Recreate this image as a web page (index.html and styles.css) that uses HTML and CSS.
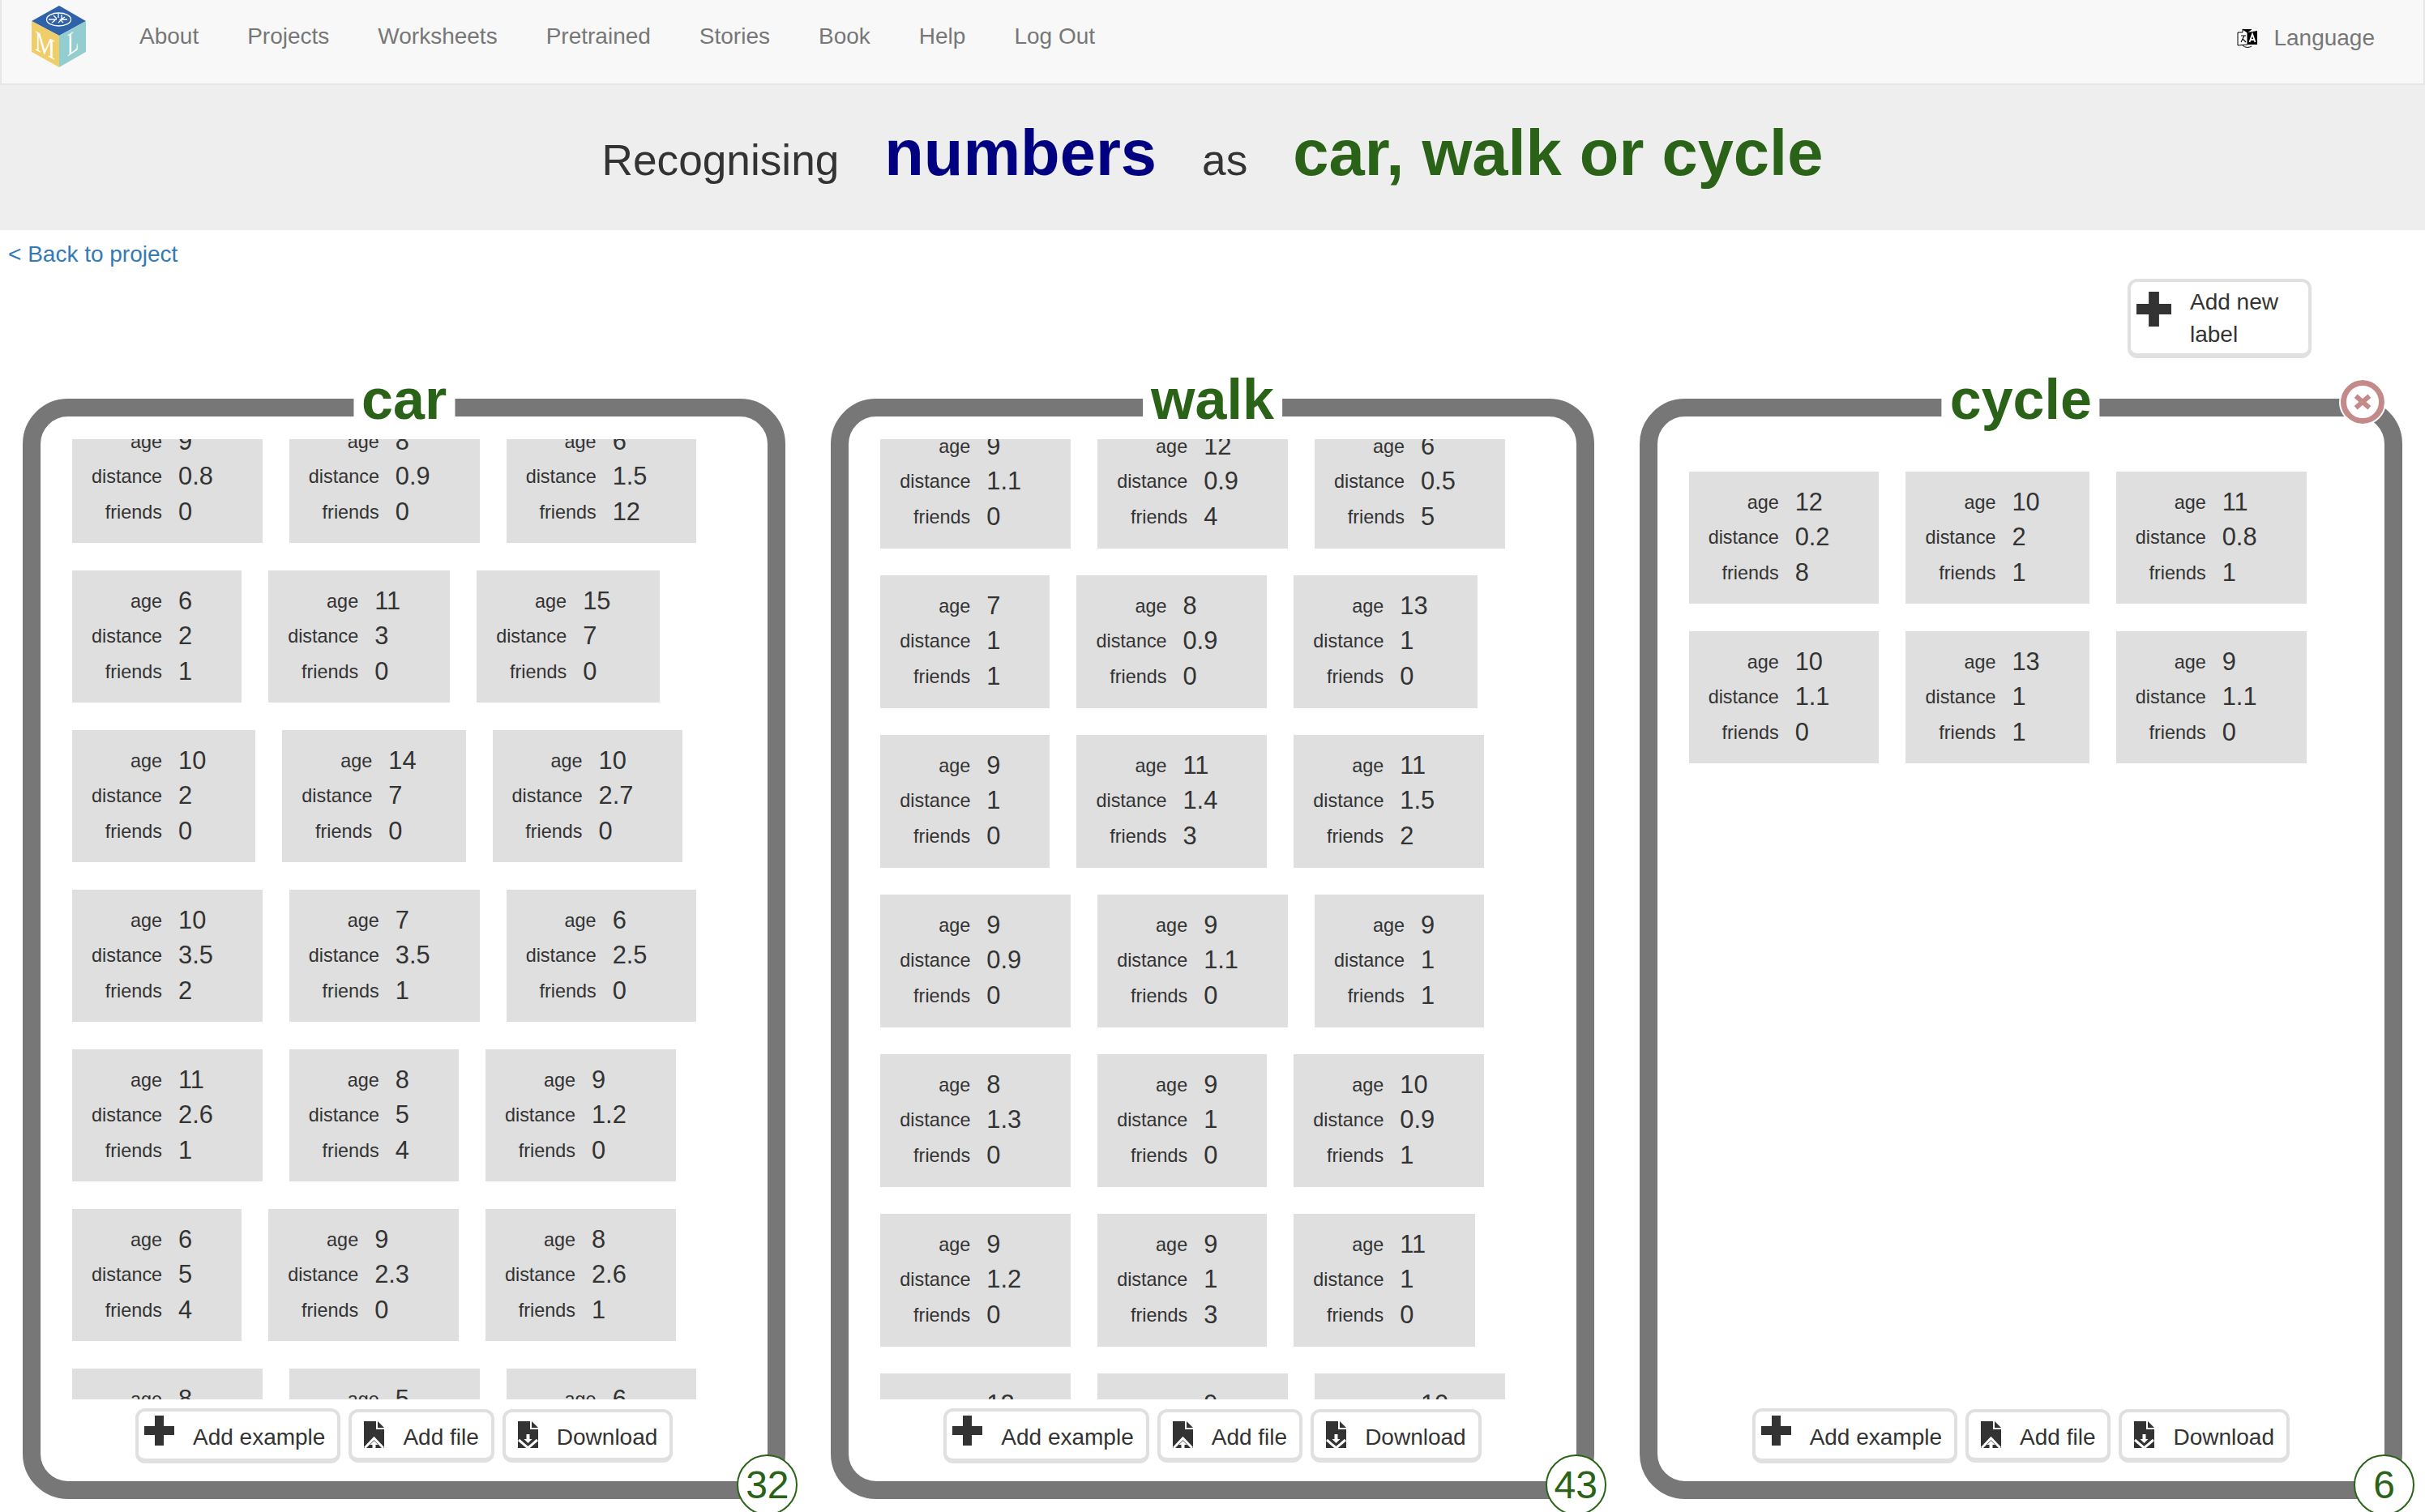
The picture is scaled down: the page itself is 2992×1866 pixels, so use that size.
FILE: index.html
```html
<!DOCTYPE html>
<html lang="en">
<head>
    <meta charset="UTF-8">
    <title>Machine Learning for Kids - Training</title>
    <link rel="stylesheet" href="styles.css">
</head>
<body>
    <nav class="navbar">
        <svg class="logo" viewBox="39 7 67 76" width="67" height="76">
            <polygon points="73,7 106,26 73,44 39,26" fill="#2f62a8"/>
            <polygon points="39,26 73,44 73,83 39,64" fill="#efcd68"/>
            <polygon points="106,26 73,44 73,83 106,64" fill="#93cdcf"/>
            <g fill="none" stroke="#fff" stroke-width="1.3">
                <ellipse cx="72.500" cy="24" rx="15" ry="8"/>
                <path d="M60 24h10M66 19l4 4M76 18v6l-4 4M80 21l-5 3h8M64 28l4-3M72 17v5M78 28l-3-3"/>
            </g>
            <text class="logo-letter" transform="matrix(.88 .46 0 1.1 43 61)" font-size="32">M</text>
            <text class="logo-letter" transform="matrix(.72 -.5 0 1.25 83 70)" font-size="32">L</text>
        </svg>
        <a href="#">About</a>
        <a href="#">Projects</a>
        <a href="#">Worksheets</a>
        <a href="#">Pretrained</a>
        <a href="#">Stories</a>
        <a href="#">Book</a>
        <a href="#">Help</a>
        <a href="#">Log Out</a>
        <div class="language">
            <svg viewBox="0 0 26 24" width="26" height="24">
                <path d="M13 5L7 1v4H1v16l12-1z" fill="#fff" stroke="#000" stroke-width="1"/>
                <path d="M13 5l12-2v17H13z" fill="#000"/>
                <path d="M7 1l6 4 5-4" fill="#000" stroke="#000"/>
                <path d="M5 9h6M9 9l-4 8M7 13l4 4" fill="none" stroke="#000" stroke-width="1.100"/>
                <path d="M15.500 17l3.500-10 3.500 10M16.800 14h4.400" fill="none" stroke="#fff" stroke-width="1.800"/>
                <path d="M7 21c3 3 8 3 11 1" fill="none" stroke="#000" stroke-width="1"/>
            </svg>
            <span>Language</span>
        </div>
    </nav>

    <header class="title-bar">
        <span>Recognising</span>
        <span class="big numbers">numbers</span>
        <span>as</span>
        <span class="big labels">car, walk or cycle</span>
    </header>

    <a class="back-link" href="#">&lt; Back to project</a>

    <div class="toolbar">
        <button class="btn btn-new">
            <svg class="icon-plus" viewBox="0 0 37 37"><use href="#plus"/></svg>
            <span>Add new label</span>
        </button>
    </div>

    <svg class="defs" width="0" height="0">
        <symbol id="plus" viewBox="0 0 37 37">
            <path d="M13 0h11v13h13v11H24v13H13V24H0V13h13z" fill="#333"/>
        </symbol>
        <symbol id="upload" viewBox="0 0 25 33">
            <path d="M0 0h15v10h10v23H0z" fill="#333"/>
            <path d="M17 0l8 8h-8z" fill="#333"/>
            <path d="M1 33l11.500-12L24 33" fill="none" stroke="#fff" stroke-width="3"/>
            <path d="M12.500 24l5 5h-3v4h-4v-4h-3z" fill="#fff"/>
        </symbol>
        <symbol id="download" viewBox="0 0 25 33">
            <path d="M0 0h15v10h10v23H0z" fill="#333"/>
            <path d="M17 0l8 8h-8z" fill="#333"/>
            <path d="M1 23l11.500 10L24 23" fill="none" stroke="#fff" stroke-width="3"/>
            <path d="M10.500 16h4v6h3l-5 5-5-5h3z" fill="#fff"/>
        </symbol>
    </svg>

    <main class="buckets">
        <section class="bucket">
            <h2 class="bucket-title">car</h2>
            <div class="examples-window">
                <div class="examples examples-car">
                    <div class="card"><span class="k">age</span><span class="v">9</span><span class="k">distance</span><span class="v">0.8</span><span class="k">friends</span><span class="v">0</span></div>
                    <div class="card"><span class="k">age</span><span class="v">8</span><span class="k">distance</span><span class="v">0.9</span><span class="k">friends</span><span class="v">0</span></div>
                    <div class="card"><span class="k">age</span><span class="v">6</span><span class="k">distance</span><span class="v">1.5</span><span class="k">friends</span><span class="v">12</span></div>

                    <div class="card"><span class="k">age</span><span class="v">6</span><span class="k">distance</span><span class="v">2</span><span class="k">friends</span><span class="v">1</span></div>
                    <div class="card"><span class="k">age</span><span class="v">11</span><span class="k">distance</span><span class="v">3</span><span class="k">friends</span><span class="v">0</span></div>
                    <div class="card"><span class="k">age</span><span class="v">15</span><span class="k">distance</span><span class="v">7</span><span class="k">friends</span><span class="v">0</span></div>

                    <div class="card"><span class="k">age</span><span class="v">10</span><span class="k">distance</span><span class="v">2</span><span class="k">friends</span><span class="v">0</span></div>
                    <div class="card"><span class="k">age</span><span class="v">14</span><span class="k">distance</span><span class="v">7</span><span class="k">friends</span><span class="v">0</span></div>
                    <div class="card"><span class="k">age</span><span class="v">10</span><span class="k">distance</span><span class="v">2.7</span><span class="k">friends</span><span class="v">0</span></div>

                    <div class="card"><span class="k">age</span><span class="v">10</span><span class="k">distance</span><span class="v">3.5</span><span class="k">friends</span><span class="v">2</span></div>
                    <div class="card"><span class="k">age</span><span class="v">7</span><span class="k">distance</span><span class="v">3.5</span><span class="k">friends</span><span class="v">1</span></div>
                    <div class="card"><span class="k">age</span><span class="v">6</span><span class="k">distance</span><span class="v">2.5</span><span class="k">friends</span><span class="v">0</span></div>

                    <div class="card"><span class="k">age</span><span class="v">11</span><span class="k">distance</span><span class="v">2.6</span><span class="k">friends</span><span class="v">1</span></div>
                    <div class="card"><span class="k">age</span><span class="v">8</span><span class="k">distance</span><span class="v">5</span><span class="k">friends</span><span class="v">4</span></div>
                    <div class="card"><span class="k">age</span><span class="v">9</span><span class="k">distance</span><span class="v">1.2</span><span class="k">friends</span><span class="v">0</span></div>

                    <div class="card"><span class="k">age</span><span class="v">6</span><span class="k">distance</span><span class="v">5</span><span class="k">friends</span><span class="v">4</span></div>
                    <div class="card"><span class="k">age</span><span class="v">9</span><span class="k">distance</span><span class="v">2.3</span><span class="k">friends</span><span class="v">0</span></div>
                    <div class="card"><span class="k">age</span><span class="v">8</span><span class="k">distance</span><span class="v">2.6</span><span class="k">friends</span><span class="v">1</span></div>

                    <div class="card"><span class="k">age</span><span class="v">8</span><span class="k">distance</span><span class="v">1.5</span><span class="k">friends</span><span class="v">0</span></div>
                    <div class="card"><span class="k">age</span><span class="v">5</span><span class="k">distance</span><span class="v">1.5</span><span class="k">friends</span><span class="v">0</span></div>
                    <div class="card"><span class="k">age</span><span class="v">6</span><span class="k">distance</span><span class="v">1.5</span><span class="k">friends</span><span class="v">0</span></div>
                </div>
            </div>
            <div class="bucket-actions">
                <button class="btn"><svg class="icon-plus" viewBox="0 0 37 37"><use href="#plus"/></svg><span>Add example</span></button>
                <button class="btn"><svg class="icon-file" viewBox="0 0 25 33"><use href="#upload"/></svg><span>Add file</span></button>
                <button class="btn"><svg class="icon-file" viewBox="0 0 25 33"><use href="#download"/></svg><span>Download</span></button>
            </div>
            <div class="count">32</div>
        </section>

        <section class="bucket">
            <h2 class="bucket-title">walk</h2>
            <div class="examples-window">
                <div class="examples examples-walk">
                    <div class="card"><span class="k">age</span><span class="v">9</span><span class="k">distance</span><span class="v">1.1</span><span class="k">friends</span><span class="v">0</span></div>
                    <div class="card"><span class="k">age</span><span class="v">12</span><span class="k">distance</span><span class="v">0.9</span><span class="k">friends</span><span class="v">4</span></div>
                    <div class="card"><span class="k">age</span><span class="v">6</span><span class="k">distance</span><span class="v">0.5</span><span class="k">friends</span><span class="v">5</span></div>

                    <div class="card"><span class="k">age</span><span class="v">7</span><span class="k">distance</span><span class="v">1</span><span class="k">friends</span><span class="v">1</span></div>
                    <div class="card"><span class="k">age</span><span class="v">8</span><span class="k">distance</span><span class="v">0.9</span><span class="k">friends</span><span class="v">0</span></div>
                    <div class="card"><span class="k">age</span><span class="v">13</span><span class="k">distance</span><span class="v">1</span><span class="k">friends</span><span class="v">0</span></div>

                    <div class="card"><span class="k">age</span><span class="v">9</span><span class="k">distance</span><span class="v">1</span><span class="k">friends</span><span class="v">0</span></div>
                    <div class="card"><span class="k">age</span><span class="v">11</span><span class="k">distance</span><span class="v">1.4</span><span class="k">friends</span><span class="v">3</span></div>
                    <div class="card"><span class="k">age</span><span class="v">11</span><span class="k">distance</span><span class="v">1.5</span><span class="k">friends</span><span class="v">2</span></div>

                    <div class="card"><span class="k">age</span><span class="v">9</span><span class="k">distance</span><span class="v">0.9</span><span class="k">friends</span><span class="v">0</span></div>
                    <div class="card"><span class="k">age</span><span class="v">9</span><span class="k">distance</span><span class="v">1.1</span><span class="k">friends</span><span class="v">0</span></div>
                    <div class="card"><span class="k">age</span><span class="v">9</span><span class="k">distance</span><span class="v">1</span><span class="k">friends</span><span class="v">1</span></div>

                    <div class="card"><span class="k">age</span><span class="v">8</span><span class="k">distance</span><span class="v">1.3</span><span class="k">friends</span><span class="v">0</span></div>
                    <div class="card"><span class="k">age</span><span class="v">9</span><span class="k">distance</span><span class="v">1</span><span class="k">friends</span><span class="v">0</span></div>
                    <div class="card"><span class="k">age</span><span class="v">10</span><span class="k">distance</span><span class="v">0.9</span><span class="k">friends</span><span class="v">1</span></div>

                    <div class="card"><span class="k">age</span><span class="v">9</span><span class="k">distance</span><span class="v">1.2</span><span class="k">friends</span><span class="v">0</span></div>
                    <div class="card"><span class="k">age</span><span class="v">9</span><span class="k">distance</span><span class="v">1</span><span class="k">friends</span><span class="v">3</span></div>
                    <div class="card"><span class="k">age</span><span class="v">11</span><span class="k">distance</span><span class="v">1</span><span class="k">friends</span><span class="v">0</span></div>

                    <div class="card"><span class="k">age</span><span class="v">12</span><span class="k">distance</span><span class="v">1.5</span><span class="k">friends</span><span class="v">0</span></div>
                    <div class="card"><span class="k">age</span><span class="v">9</span><span class="k">distance</span><span class="v">1.5</span><span class="k">friends</span><span class="v">0</span></div>
                    <div class="card"><span class="k">age</span><span class="v">10</span><span class="k">distance</span><span class="v">1.5</span><span class="k">friends</span><span class="v">0</span></div>
                </div>
            </div>
            <div class="bucket-actions">
                <button class="btn"><svg class="icon-plus" viewBox="0 0 37 37"><use href="#plus"/></svg><span>Add example</span></button>
                <button class="btn"><svg class="icon-file" viewBox="0 0 25 33"><use href="#upload"/></svg><span>Add file</span></button>
                <button class="btn"><svg class="icon-file" viewBox="0 0 25 33"><use href="#download"/></svg><span>Download</span></button>
            </div>
            <div class="count">43</div>
        </section>

        <section class="bucket">
            <h2 class="bucket-title">cycle</h2>
            <div class="remove-label">
                <svg viewBox="0 0 20 20" width="24" height="24"><path d="M3 4l14 12M17 4L3 16" stroke="#c48a8a" stroke-width="5" fill="none"/></svg>
            </div>
            <div class="examples-window">
                <div class="examples examples-cycle">
                    <div class="card"><span class="k">age</span><span class="v">12</span><span class="k">distance</span><span class="v">0.2</span><span class="k">friends</span><span class="v">8</span></div>
                    <div class="card"><span class="k">age</span><span class="v">10</span><span class="k">distance</span><span class="v">2</span><span class="k">friends</span><span class="v">1</span></div>
                    <div class="card"><span class="k">age</span><span class="v">11</span><span class="k">distance</span><span class="v">0.8</span><span class="k">friends</span><span class="v">1</span></div>

                    <div class="card"><span class="k">age</span><span class="v">10</span><span class="k">distance</span><span class="v">1.1</span><span class="k">friends</span><span class="v">0</span></div>
                    <div class="card"><span class="k">age</span><span class="v">13</span><span class="k">distance</span><span class="v">1</span><span class="k">friends</span><span class="v">1</span></div>
                    <div class="card"><span class="k">age</span><span class="v">9</span><span class="k">distance</span><span class="v">1.1</span><span class="k">friends</span><span class="v">0</span></div>
                </div>
            </div>
            <div class="bucket-actions">
                <button class="btn"><svg class="icon-plus" viewBox="0 0 37 37"><use href="#plus"/></svg><span>Add example</span></button>
                <button class="btn"><svg class="icon-file" viewBox="0 0 25 33"><use href="#upload"/></svg><span>Add file</span></button>
                <button class="btn"><svg class="icon-file" viewBox="0 0 25 33"><use href="#download"/></svg><span>Download</span></button>
            </div>
            <div class="count">6</div>
        </section>
    </main>
</body>
</html>
```

FILE: styles.css
```css
html, body {
    margin: 0;
    height: 1866px;
    overflow: hidden;
}
body {
    font-family: "Liberation Sans", Arial, sans-serif;
    font-size: 28px;
    line-height: 40px;
    color: #333;
    background-color: #fff;
}
a {
    text-decoration: none;
}
.defs {
    display: block;
    height: 0;
}

/* top nav */
.navbar {
    box-sizing: border-box;
    height: 105px;
    display: flex;
    align-items: flex-start;
    background-color: #f8f8f8;
    border: 2px solid #e7e7e7;
    border-top: none;
    padding-left: 37px;
}
.logo {
    margin: 7px 66px 0 0;
    flex: none;
}
.logo-letter {
    font-family: "Liberation Serif", serif;
    fill: #fff;
}
.navbar > a {
    color: #777;
    margin: 25px 60px 0 0;
}
.language {
    margin: 27px 60px 0 auto;
    display: flex;
    align-items: center;
    gap: 19px;
    color: #777;
}

/* heading */
.title-bar {
    height: 179px;
    background-color: #eee;
    display: flex;
    justify-content: center;
    align-items: baseline;
    gap: 56px;
    font-size: 53.200px;
    line-height: 167px;
    box-sizing: border-box;
    overflow: hidden;
}
.big {
    font-size: 79.500px;
    font-weight: bold;
}
.numbers {
    color: #000080;
}
.labels {
    color: #2a6317;
}
.back-link {
    display: block;
    color: #337ab7;
    margin: 10px 0 0 10px;
}

/* add new label */
.toolbar {
    display: flex;
    justify-content: flex-end;
    padding-right: 140px;
    margin-top: 10px;
}
.btn {
    display: flex;
    align-items: flex-start;
    box-sizing: border-box;
    font: inherit;
    color: #333;
    background-color: #fff;
    border: 4px solid #e0e0e0;
    border-bottom-width: 6px;
    border-radius: 12px;
    padding: 0;
    text-align: left;
}
.btn-new {
    width: 227px;
    height: 98px;
    padding: 5px 0 0 7px;
}
.btn-new span {
    margin-left: 23px;
    width: 140px;
}
.icon-plus {
    width: 37px;
    height: 37px;
    flex: none;
}
.btn-new .icon-plus {
    width: 43px;
    height: 43px;
    margin-top: 7px;
}
.icon-file {
    width: 25px;
    height: 33px;
    flex: none;
}

/* the three label buckets */
.buckets {
    display: flex;
    gap: 56px;
    padding: 0 28px;
    margin-top: 50px;
}
.bucket {
    position: relative;
    flex: 1;
    box-sizing: border-box;
    height: 1358px;
    border: 22px solid #777;
    border-radius: 56px;
    padding: 28px 0 22px;
    display: flex;
    flex-direction: column;
}
.bucket-title {
    position: absolute;
    top: -46px;
    left: 50%;
    transform: translateX(-50%);
    margin: 0;
    padding: 0 10px;
    background-color: #fff;
    color: #2a6317;
    font-size: 70px;
    line-height: 50px;
    font-weight: bold;
    height: 74px;
}
.examples-window {
    height: 1185px;
    overflow: hidden;
    flex: none;
}
.examples {
    display: flex;
    flex-wrap: wrap;
    justify-content: flex-start;
    column-gap: 33px;
    padding-left: 39px;
}
.examples-car {
    margin-top: -35px;
}
.examples-walk {
    margin-top: -29px;
}
.examples-cycle {
    margin-top: 40px;
}
.card {
    display: grid;
    grid-template-columns: 87px auto;
    grid-auto-rows: 43.500px;
    column-gap: 20px;
    align-items: center;
    box-sizing: border-box;
    height: 163px;
    padding: 16px 61px 0 24px;
    margin-bottom: 34px;
    background-color: #dfdfdf;
}
.examples-walk .card {
    height: 164px;
    margin-bottom: 33px;
}
.k {
    font-size: 23.400px;
    text-align: right;
}
.v {
    font-size: 30.800px;
}
.bucket-actions {
    margin-top: 11px;
    height: 68px;
    display: flex;
    justify-content: center;
    align-items: center;
    gap: 10px;
}
.bucket-actions .btn {
    height: 66px;
    padding: 4px 15px 0 7px;
}
.bucket-actions .btn:first-child {
    height: 68px;
    padding-top: 5px;
}
.bucket-actions .btn span {
    margin: 7px 0 0 23px;
}
.bucket-actions .icon-file {
    margin: 7px 0 0 8px;
}
.count {
    position: absolute;
    right: -37px;
    bottom: -42px;
    box-sizing: border-box;
    width: 75px;
    height: 75px;
    border: 2px solid #2a6317;
    border-radius: 50%;
    background-color: #fff;
    color: #2a6317;
    font-size: 48px;
    line-height: 71px;
    text-align: center;
}
.remove-label {
    position: absolute;
    top: -45px;
    right: 0;
    box-sizing: border-box;
    width: 54px;
    height: 54px;
    border: 7px solid #c48a8a;
    outline: 2px solid #fff;
    border-radius: 50%;
    background-color: #fff;
    display: flex;
    align-items: center;
    justify-content: center;
}
```
